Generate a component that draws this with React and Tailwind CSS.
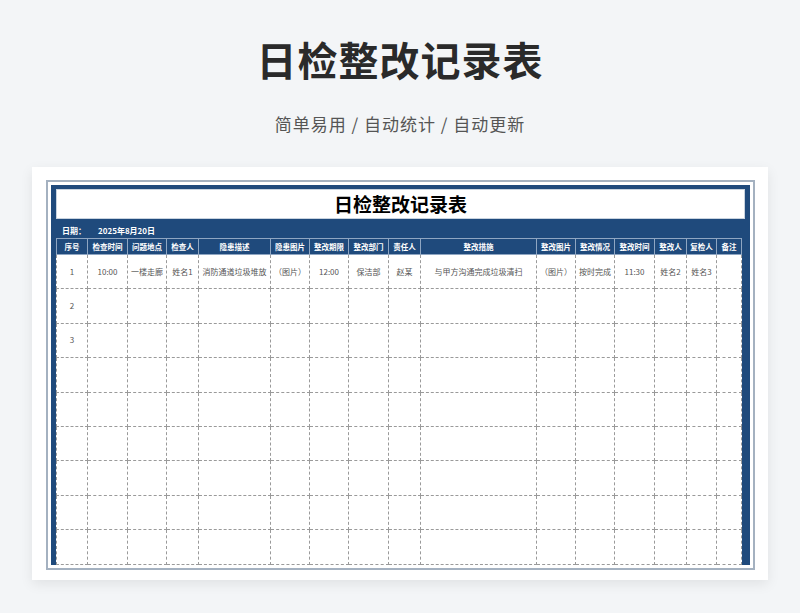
const cols = [31,40,39,32,72,39,39,40,32,116,39,39,40,32,30,25];
const heads = ["序号","检查时间","问题地点","检查人","隐患描述","隐患图片","整改期限","整改部门","责任人","整改措施","整改图片","整改情况","整改时间","整改人","复检人","备注"];
const row1 = ["1","10:00","一楼走廊","姓名1","消防通道垃圾堆放","（图片）","12:00","保洁部","赵某","与甲方沟通完成垃圾清扫","（图片）","按时完成","11:30","姓名2","姓名3",""];
const rows = [row1, ["2"], ["3"], [], [], [], [], [], []];

export default function App() {
  return (
    <div className="w-[800px] h-[613px] bg-[#f3f5f7] flex flex-col items-center overflow-hidden" style={{fontFamily:'"Noto Sans CJK SC", "Noto Sans", sans-serif'}}>
      <div className="mt-[32px] h-[54px] text-[40px] leading-[54px] font-bold text-[#2a2a2a] tracking-[1px]">日检整改记录表</div>
      <div className="mt-[25px] h-[26px] text-[17px] leading-[26px] text-[#555] tracking-[1px]">简单易用 / 自动统计 / 自动更新</div>
      <div className="mt-[30px] w-[736px] h-[413px] shrink-0 bg-white shadow-[0_4px_12px_rgba(0,0,0,0.08)] pt-[13px] pl-[14px]">
        <div className="w-[709px] h-[390px] border-[2px] border-[#a4b1c0] p-[3px]">
          <div className="w-full h-full bg-[#1f4a7c] px-[5px] pt-[4px] overflow-hidden">
            <div className="h-[30px] bg-white border border-[#c8d3df] flex items-center justify-center text-[19px] font-bold text-black">日检整改记录表</div>
            <div className="h-[19px] flex items-end pb-[1px] pl-[6px] text-[8px] font-bold text-white">
              <span>日期：</span><span className="ml-[12px]">2025年8月20日</span>
            </div>
            <table className="border-collapse table-fixed bg-white" style={{width:685}}>
              <colgroup>{cols.map((w,i)=><col key={i} style={{width:w}}/>)}</colgroup>
              <thead>
                <tr className="h-[16px]">
                  {heads.map((h,i)=><th key={i} className="bg-[#1f4a7c] border border-[#8fa6c2] text-[7.5px] font-bold text-white p-0 whitespace-nowrap overflow-hidden">{h}</th>)}
                </tr>
              </thead>
              <tbody>
                {rows.map((r,ri)=>(
                  <tr key={ri} className="h-[34.4px]">
                    {cols.map((_,ci)=><td key={ci} className="border border-dashed border-[#9a9a9a] text-center text-[8px] text-[#555] p-0 whitespace-nowrap overflow-hidden">{r[ci]||""}</td>)}
                  </tr>
                ))}
              </tbody>
            </table>
          </div>
        </div>
      </div>
    </div>
  );
}
